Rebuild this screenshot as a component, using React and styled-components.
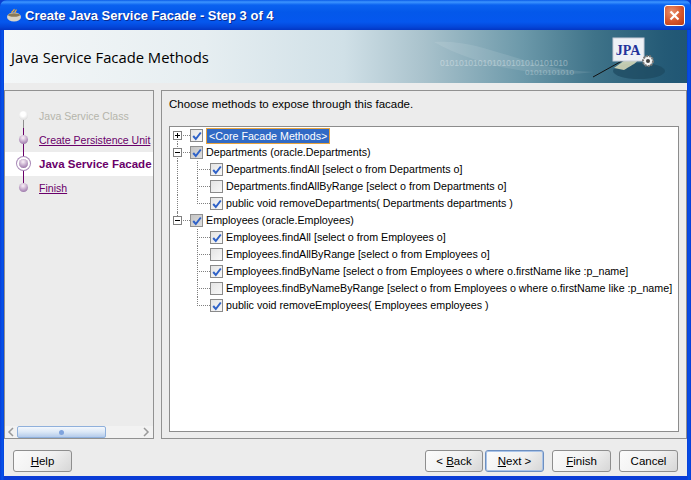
import React from 'react';
import styled, { createGlobalStyle } from 'styled-components';

const GlobalStyle = createGlobalStyle`
  html, body { margin: 0; padding: 0; background: #0a3fd0; }
  * { box-sizing: border-box; }
`;

const Window = styled.div`
  width: 691px;
  height: 480px;
  display: flex;
  flex-direction: column;
  overflow: hidden;
  font-family: "Liberation Sans", sans-serif;
  font-size: 11.5px;
  color: #000;
  background: linear-gradient(90deg, #0a3cd6 0, #0451e8 2px, #0451e8 3px, #0a3cd6 4px, #0a3cd6 687px, #0451e8 689px, #0a3cd6 691px);
  border-radius: 7px 7px 0 0;
  padding-bottom: 4px;
`;

const TitleBar = styled.div`
  height: 30px;
  flex: none;
  display: flex;
  align-items: center;
  padding: 0 6px 0 6px;
  gap: 3px;
  background: linear-gradient(180deg, #0a5be8 0, #3d95ff 2px, #0a62f0 5px, #0458ea 12px, #0557ee 22px, #0446d8 27px, #0336c4 30px);
`;

const TitleText = styled.span`
  font-family: "Liberation Sans", sans-serif;
  font-weight: 700;
  font-size: 13px;
  color: #fff;
  text-shadow: 1px 1px 0 #0a2a90;
  flex: 1;
`;

const CloseButton = styled.div`
  width: 21px;
  height: 21px;
  border: 1px solid #fff;
  border-radius: 3px;
  background: radial-gradient(circle at 35% 30%, #e8906c, #d6552c 55%, #b83a15);
  display: flex;
  align-items: center;
  justify-content: center;
`;

const Content = styled.div`
  flex: 1;
  margin: 0 4px;
  display: flex;
  flex-direction: column;
  background: #ececec;
  min-height: 0;
`;

const Banner = styled.div`
  height: 53px;
  flex: none;
  position: relative;
  overflow: hidden;
  display: flex;
  align-items: center;
  padding: 0 0 0 7px;
  background: linear-gradient(90deg, #f4f7f8 0, #e6eef1 200px, #d0e0e7 340px, #a9c2cc 420px, #6b98a9 520px, #3f7389 590px, #245a76 660px, #205674 683px);
`;

const BannerTitle = styled.h1`
  margin: 0;
  font-family: "Open Sans", "Liberation Sans", sans-serif;
  font-weight: 400;
  font-size: 14.8px;
  color: #000;
`;

const BannerArt = styled.svg`
  position: absolute;
  left: 0;
  top: 0;
`;

const Main = styled.div`
  flex: 1;
  min-height: 0;
  display: flex;
  gap: 7px;
  padding-top: 7px;
`;

const StepPanel = styled.div`
  width: 150px;
  flex: none;
  border: 1px solid #919191;
  display: flex;
  flex-direction: column;
  overflow: hidden;
`;

const StepList = styled.div`
  flex: 1;
  padding-top: 13px;
  display: flex;
  flex-direction: column;
`;

const Step = styled.div`
  height: 24px;
  flex: none;
  position: relative;
  display: flex;
  align-items: center;
  padding-left: 34px;
  white-space: nowrap;
  overflow: hidden;
  background: ${p => (p.$current ? '#fff' : 'transparent')};
  color: ${p => (p.$done ? '#b5b5ab' : '#6a006a')};
  font-weight: ${p => (p.$current ? 700 : 400)};
  font-size: ${p => (p.$current ? '11.5px' : '10.55px')};
  text-decoration: ${p => (p.$link ? 'underline' : 'none')};

  &::before {
    content: '';
    position: absolute;
    left: 18px;
    top: ${p => (p.$first ? '12px' : '0')};
    bottom: ${p => (p.$last ? '12px' : '0')};
    width: 1px;
    background: ${p => (p.$done ? '#8e8e8e' : '#6a006a')};
  }
`;

const StepDot = styled.span`
  position: absolute;
  left: 14px;
  top: 7px;
  width: 9px;
  height: 9px;
  border-radius: 50%;
  background: ${p =>
    p.$done
      ? 'radial-gradient(circle at 45% 35%, #fff 30%, #c9c9c9)'
      : 'radial-gradient(circle at 45% 30%, #f0e4f0 10%, #a987b5 70%, #7a5a8c)'};
  box-shadow: ${p => (p.$current ? '0 0 0 2px #fff, 0 0 0 3px #a98ab8' : 'none')};
`;

const ScrollBar = styled.div`
  height: 12px;
  flex: none;
  display: flex;
  align-items: center;
  justify-content: space-between;
  padding: 0 3px 0 2px;
  background: #f2f2f2;
`;

const ScrollThumb = styled.div`
  width: 89px;
  height: 12px;
  margin-left: 2px;
  margin-right: auto;
  border: 1px solid #8fb0dc;
  border-radius: 2px;
  background: linear-gradient(180deg, #f4f8fd 0, #dbe7f6 50%, #b4cbea 100%);
  display: flex;
  align-items: center;
  justify-content: center;

  &::after {
    content: '';
    width: 5px;
    height: 5px;
    border-radius: 50%;
    background: #7fa3dd;
  }
`;

const MethodPanel = styled.div`
  flex: 1;
  border: 1px solid #919191;
  display: flex;
  flex-direction: column;
  padding: 0 7px 6px 7px;
  min-width: 0;
`;

const Prompt = styled.div`
  height: 35px;
  flex: none;
  padding-top: 6px;
  line-height: 15px;
`;

const Tree = styled.div`
  flex: 1;
  background: #fff;
  border: 1px solid #8c8c8c;
  overflow: hidden;
  font-size: 10.7px;
`;

const Row = styled.div`
  height: 17px;
  position: relative;
  display: flex;
  align-items: center;
  padding-left: ${p => (p.$child ? '40px' : '20px')};
  white-space: nowrap;

  &::before {
    content: '';
    position: absolute;
    left: ${p => (p.$child ? '27px' : '13px')};
    top: 8px;
    width: ${p => (p.$child ? '13px' : '7px')};
    border-top: 1px dotted #808080;
  }
`;

const Spine = styled.span`
  position: absolute;
  left: ${p => p.$left}px;
  top: ${p => p.$top ?? 0}px;
  height: ${p => p.$height ?? 17}px;
  border-left: 1px dotted #808080;
`;

const Expander = styled.span`
  position: absolute;
  left: 3px;
  top: 4px;
  width: 9px;
  height: 9px;
  background: #fff;
  border: 1px solid #808080;
  z-index: 1;

  &::before {
    content: '';
    position: absolute;
    left: 1px;
    top: 3px;
    width: 5px;
    height: 1px;
    background: #000;
  }

  &::after {
    content: '';
    display: ${p => (p.$open ? 'none' : 'block')};
    position: absolute;
    left: 3px;
    top: 1px;
    width: 1px;
    height: 5px;
    background: #000;
  }
`;

const CheckBox = styled.span`
  width: 13px;
  height: 13px;
  flex: none;
  display: flex;
  align-items: center;
  justify-content: center;
  position: relative;
  z-index: 1;
  border: 1px solid ${p => (p.$parent ? '#8f8f8f' : '#8a8a8a')};
  background: ${p =>
    p.$parent
      ? 'linear-gradient(135deg, #c4c4c4, #dedede)'
      : 'linear-gradient(135deg, #e4e4e4, #f8f8f8)'};
`;

const Label = styled.span`
  padding: 0 ${p => (p.$selected ? '2px' : '0')};
  margin-left: ${p => (p.$selected ? '4px' : '3px')};
  line-height: ${p => (p.$selected ? '14px' : '15px')};
  color: ${p => (p.$selected ? '#fff' : '#000')};
  background: ${p => (p.$selected ? '#316ac5' : 'transparent')};
  outline: ${p => (p.$selected ? '1px solid #e8a33d' : 'none')};
`;

const Footer = styled.div`
  height: 37px;
  flex: none;
  display: flex;
  align-items: flex-start;
  padding: 11px 9px 0 9px;
`;

const FooterButton = styled.div`
  width: ${p => p.$width ?? 59}px;
  height: 22px;
  margin-left: ${p => p.$gap ?? 0}px;
  margin-right: ${p => (p.$help ? 'auto' : '0')};
  display: flex;
  align-items: center;
  justify-content: center;
  border: 1px solid ${p => (p.$default ? '#6d8fc0' : '#8e8e8e')};
  border-radius: 3px;
  background: linear-gradient(135deg, #fbfbfb 0, #f0f0f0 55%, #d6d6d6 100%);
  box-shadow: ${p => (p.$default ? 'inset 0 0 0 1px #a9c3e8' : 'none')};

  u { text-decoration: underline; }
`;

const Check = () => (
  <svg width="10" height="10" viewBox="0 0 10 10">
    <path d="M1.2 5 L3.8 8 L8.8 1.5" fill="none" stroke="#2f62c8" strokeWidth="2" />
  </svg>
);

const steps = [
  { label: 'Java Service Class', done: true, first: true },
  { label: 'Create Persistence Unit', link: true },
  { label: 'Java Service Facade', current: true },
  { label: 'Finish', link: true, last: true },
];

const departmentRows = [
  { label: 'Departments.findAll [select o from Departments o]', checked: true },
  { label: 'Departments.findAllByRange [select o from Departments o]', checked: false },
  { label: 'public void removeDepartments( Departments departments )', checked: true, end: true },
];

const employeeRows = [
  { label: 'Employees.findAll [select o from Employees o]', checked: true },
  { label: 'Employees.findAllByRange [select o from Employees o]', checked: false },
  { label: 'Employees.findByName [select o from Employees o where o.firstName like :p_name]', checked: true },
  { label: 'Employees.findByNameByRange [select o from Employees o where o.firstName like :p_name]', checked: false },
  { label: 'public void removeEmployees( Employees employees )', checked: true, end: true },
];

const ChildRow = ({ row, outerSpine }) => (
  <Row $child>
    {outerSpine && <Spine $left={7} />}
    <Spine $left={27} $height={row.end ? 9 : 17} />
    <CheckBox>{row.checked && <Check />}</CheckBox>
    <Label>{row.label}</Label>
  </Row>
);

const App = () => (
  <Window>
    <GlobalStyle />
    <TitleBar>
      <svg width="16" height="16" viewBox="0 0 16 16">
        <ellipse cx="8" cy="10" rx="7" ry="4.6" fill="#d8d4c8" />
        <ellipse cx="8" cy="8" rx="6" ry="1.8" fill="#8a7a58" />
        <path d="M6 6 C5 4 9 4 8 2 M9 6 C8 4.5 11 4 10 2.5" fill="none" stroke="#f0b040" strokeWidth="1.2" />
      </svg>
      <TitleText>Create Java Service Facade - Step 3 of 4</TitleText>
      <CloseButton>
        <svg width="11" height="11" viewBox="0 0 11 11">
          <path d="M1.5 1.5 L9.5 9.5 M9.5 1.5 L1.5 9.5" stroke="#fff" strokeWidth="2.2" />
        </svg>
      </CloseButton>
    </TitleBar>
    <Content>
      <Banner>
        <BannerTitle>Java Service Facade Methods</BannerTitle>
        <BannerArt width="683" height="53" viewBox="0 0 683 53">
          <path d="M430 12 C480 8 520 40 590 42 C545 48 480 40 430 12Z" fill="#ffffff" opacity="0.1" />
          <text x="436" y="36" fontFamily="Liberation Sans, sans-serif" fontSize="8.5" fill="#ffffff" opacity="0.35">010101010101010101010101010</text>
          <text x="521" y="45" fontFamily="Liberation Sans, sans-serif" fontSize="8" fill="#ffffff" opacity="0.3">01010101010</text>
          <ellipse cx="635" cy="41" rx="26" ry="8" fill="#1c4860" opacity="0.7" />
          <path d="M620 40 C630 34 640 30 628 25 L610 38Z" fill="#e8e6c0" opacity="0.8" />
          <path d="M589 47 L625 27" stroke="#111" strokeWidth="1" />
          <rect x="609" y="8" width="31" height="23" fill="#eef1f6" stroke="#c8ccd8" />
          <text x="624" y="25" textAnchor="middle" fontFamily="Liberation Serif, serif" fontWeight="700" fontSize="14" fill="#22339a">JPA</text>
          <circle cx="644" cy="31" r="5" fill="#f4f4f4" stroke="#777" strokeDasharray="2 1" strokeWidth="2" />
          <circle cx="644" cy="31" r="2" fill="#444" />
        </BannerArt>
      </Banner>
      <Main>
        <StepPanel>
          <StepList>
            {steps.map(step => (
              <Step key={step.label} $done={step.done} $current={step.current} $link={step.link} $first={step.first} $last={step.last}>
                <StepDot $done={step.done} $current={step.current} />
                {step.label}
              </Step>
            ))}
          </StepList>
          <ScrollBar>
            <svg width="8" height="10" viewBox="0 0 8 10"><path d="M6 1 L2 5 L6 9" fill="none" stroke="#999" strokeWidth="1.5" /></svg>
            <ScrollThumb />
            <svg width="8" height="10" viewBox="0 0 8 10"><path d="M2 1 L6 5 L2 9" fill="none" stroke="#999" strokeWidth="1.5" /></svg>
          </ScrollBar>
        </StepPanel>
        <MethodPanel>
          <Prompt>Choose methods to expose through this facade.</Prompt>
          <Tree>
            <Row>
              <Spine $left={7} $top={8} $height={9} />
              <Expander />
              <CheckBox><Check /></CheckBox>
              <Label $selected>&lt;Core Facade Methods&gt;</Label>
            </Row>
            <Row>
              <Spine $left={7} />
              <Expander $open />
              <CheckBox $parent><Check /></CheckBox>
              <Label>Departments (oracle.Departments)</Label>
            </Row>
            {departmentRows.map(row => <ChildRow key={row.label} row={row} outerSpine />)}
            <Row>
              <Spine $left={7} $height={8} />
              <Expander $open />
              <CheckBox $parent><Check /></CheckBox>
              <Label>Employees (oracle.Employees)</Label>
            </Row>
            {employeeRows.map(row => <ChildRow key={row.label} row={row} />)}
          </Tree>
        </MethodPanel>
      </Main>
      <Footer>
        <FooterButton $help><span><u>H</u>elp</span></FooterButton>
        <FooterButton $width={58}><span>&lt; <u>B</u>ack</span></FooterButton>
        <FooterButton $default $gap={2}><span><u>N</u>ext &gt;</span></FooterButton>
        <FooterButton $gap={8}><span><u>F</u>inish</span></FooterButton>
        <FooterButton $gap={8}><span>Cancel</span></FooterButton>
      </Footer>
    </Content>
  </Window>
);

export default App;
